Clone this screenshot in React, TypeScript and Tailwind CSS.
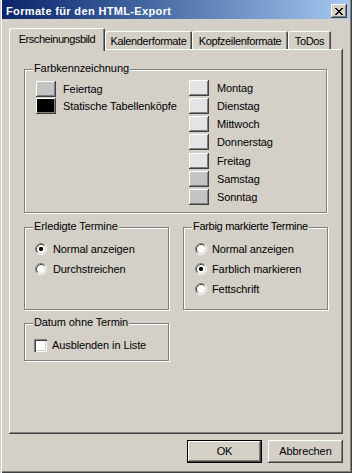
import React from "react";

const raised =
  "shadow-[inset_-1px_-1px_0_#404040,inset_1px_1px_0_#ffffff,inset_-2px_-2px_0_#808080]";

const tabShadow =
  "shadow-[inset_1px_1px_0_#ffffff,inset_-1px_0_0_#404040,inset_-2px_0_0_#808080]";

function Group({
  title,
  className,
  children,
}: {
  title: string;
  className: string;
  children?: React.ReactNode;
}) {
  return (
    <div
      className={`relative border border-[#808080] shadow-[inset_1px_1px_0_#ffffff,1px_1px_0_#ffffff] ${className}`}
    >
      <span className="absolute left-[8px] top-[-8px] bg-[#d4d0c8] px-[1px] leading-[13px] whitespace-nowrap">
        {title}
      </span>
      {children}
    </div>
  );
}

function Swatch({ color }: { color: string }) {
  return (
    <div
      className={`w-[20px] h-[16px] shrink-0 ${raised}`}
      style={{ backgroundColor: color }}
    />
  );
}

function Radio({ checked }: { checked?: boolean }) {
  return (
    <svg width="12" height="12" viewBox="0 0 12 12" className="shrink-0">
      <circle cx="6" cy="6" r="5" fill="#ffffff" />
      <path d="M 2.11 9.89 A 5.5 5.5 0 0 1 9.89 2.11" fill="none" stroke="#808080" strokeWidth="1" />
      <path d="M 9.89 2.11 A 5.5 5.5 0 0 1 2.11 9.89" fill="none" stroke="#ffffff" strokeWidth="1" />
      <path d="M 2.82 9.18 A 4.5 4.5 0 0 1 9.18 2.82" fill="none" stroke="#404040" strokeWidth="1" />
      <path d="M 9.18 2.82 A 4.5 4.5 0 0 1 2.82 9.18" fill="none" stroke="#d4d0c8" strokeWidth="1" />
      {checked && <rect x="4" y="4" width="4" height="4" rx="1.4" fill="#000000" />}
    </svg>
  );
}

function CloseX() {
  const rows = [
    "XX....XX",
    ".XX..XX.",
    "..XXXX..",
    "...XX...",
    "..XXXX..",
    ".XX..XX.",
    "XX....XX",
  ];
  const rects: React.ReactNode[] = [];
  rows.forEach((r, y) =>
    r.split("").forEach((c, x) => {
      if (c === "X") rects.push(<rect key={`${x}-${y}`} x={x} y={y} width="1" height="1" fill="#000" />);
    })
  );
  return (
    <svg width="8" height="7" viewBox="0 0 8 7" shapeRendering="crispEdges">
      {rects}
    </svg>
  );
}

export default function App() {
  return (
    <div className="w-[352px] h-[473px] bg-[#d4d0c8] flex flex-col font-['Liberation_Sans',Arial,sans-serif] text-[11px] tracking-[-0.1px] text-black shadow-[inset_1px_0_0_#d4d0c8,inset_2px_0_0_#ffffff,inset_-1px_-1px_0_#404040,inset_-2px_-2px_0_#808080]">
      {/* Title bar */}
      <div className="mx-[2px] h-[19px] bg-linear-to-r from-[#0a246a] to-[#a6caf0] flex items-start pl-[4px] pr-[3px]">
        <span className="flex-1 pt-[5px] text-white font-bold text-[11px] leading-[13px] tracking-[0.35px]">
          Formate für den HTML-Export
        </span>
        <div className={`mt-[4px] w-[16px] h-[14px] bg-[#d4d0c8] flex items-center justify-center ${raised}`}>
          <CloseX />
        </div>
      </div>

      {/* Tabs */}
      <div className="flex items-end pl-[9px] mt-[9px] h-[21px] tracking-[-0.35px]">
        <div className={`relative z-10 w-[96px] h-[23px] -mb-[2px] bg-[#d4d0c8] flex justify-center pt-[5px] leading-[13px] rounded-t-[2px] tracking-[-0.45px] ${tabShadow}`}>
          Erscheinungsbild
        </div>
        <div className={`w-[87px] h-[18px] flex justify-center pt-[4px] leading-[13px] rounded-t-[2px] ${tabShadow}`}>
          Kalenderformate
        </div>
        <div className={`w-[96px] h-[18px] flex justify-center pt-[4px] leading-[13px] rounded-t-[2px] ${tabShadow}`}>
          Kopfzeilenformate
        </div>
        <div className={`w-[43px] h-[18px] flex justify-center pt-[4px] leading-[13px] rounded-t-[2px] ${tabShadow}`}>
          ToDos
        </div>
      </div>

      {/* Panel */}
      <div className={`ml-[9px] w-[334px] h-[385px] flex flex-col pl-[15px] pt-[20px] ${raised}`}>
        <Group title="Farbkennzeichnung" className="w-[303px] h-[144px] flex pl-[11px] pt-[11px]">
          <div className="w-[153px] flex flex-col gap-[1px]">
            <div className="flex items-center gap-[7px] h-[16px]">
              <Swatch color="#c4c4c4" />
              <span>Feiertag</span>
            </div>
            <div className="flex items-center gap-[7px] h-[16px]">
              <Swatch color="#000000" />
              <span className="whitespace-nowrap">Statische Tabellenköpfe</span>
            </div>
          </div>
          <div className="flex flex-col -mt-[1px]">
            {[
              ["Montag", "#e4e4e4", 0],
              ["Dienstag", "#e4e4e4", 2],
              ["Mittwoch", "#e4e4e4", 2],
              ["Donnerstag", "#e4e4e4", 2],
              ["Freitag", "#e4e4e4", 3],
              ["Samstag", "#c4c4c4", 2],
              ["Sonntag", "#c4c4c4", 2],
            ].map(([label, color, mt]) => (
              <div
                key={label as string}
                className="flex items-center gap-[8px] h-[16px]"
                style={{ marginTop: mt as number }}
              >
                <Swatch color={color as string} />
                <span>{label}</span>
              </div>
            ))}
          </div>
        </Group>

        <div className="flex gap-[14px] mt-[14px]">
          <Group title="Erledigte Termine" className="w-[145px] h-[83px] flex flex-col pl-[10px] pt-[15px] gap-[8px]">
            <div className="flex items-center gap-[6px] h-[12px]">
              <Radio checked />
              <span>Normal anzeigen</span>
            </div>
            <div className="flex items-center gap-[6px] h-[12px]">
              <Radio />
              <span>Durchstreichen</span>
            </div>
          </Group>
          <Group title="Farbig markierte Termine" className="w-[145px] h-[83px] flex flex-col pl-[11px] pt-[15px] gap-[8px] tracking-[-0.3px]">
            <div className="flex items-center gap-[5px] h-[12px] tracking-[-0.1px]">
              <Radio />
              <span>Normal anzeigen</span>
            </div>
            <div className="flex items-center gap-[5px] h-[12px] tracking-[-0.1px]">
              <Radio checked />
              <span>Farblich markieren</span>
            </div>
            <div className="flex items-center gap-[5px] h-[12px] tracking-[-0.1px]">
              <Radio />
              <span>Fettschrift</span>
            </div>
          </Group>
        </div>

        <Group title="Datum ohne Termin" className="w-[145px] h-[38px] mt-[13px] flex pl-[9px] pt-[15px]">
          <div className="flex items-center gap-[5px] h-[13px]">
            <div className="w-[13px] h-[13px] bg-white shrink-0 shadow-[inset_1px_1px_0_#808080,inset_2px_2px_0_#404040,inset_-1px_-1px_0_#ffffff,inset_-2px_-2px_0_#d4d0c8]" />
            <span>Ausblenden in Liste</span>
          </div>
        </Group>
      </div>

      {/* Buttons */}
      <div className="flex justify-end gap-[6px] pr-[9px] mt-[6px]">
        <div className="w-[75px] h-[23px] border border-black">
          <div className={`w-full h-full flex items-center justify-center ${raised}`}>OK</div>
        </div>
        <div className={`w-[75px] h-[23px] flex items-center justify-center ${raised}`}>Abbrechen</div>
      </div>
    </div>
  );
}
